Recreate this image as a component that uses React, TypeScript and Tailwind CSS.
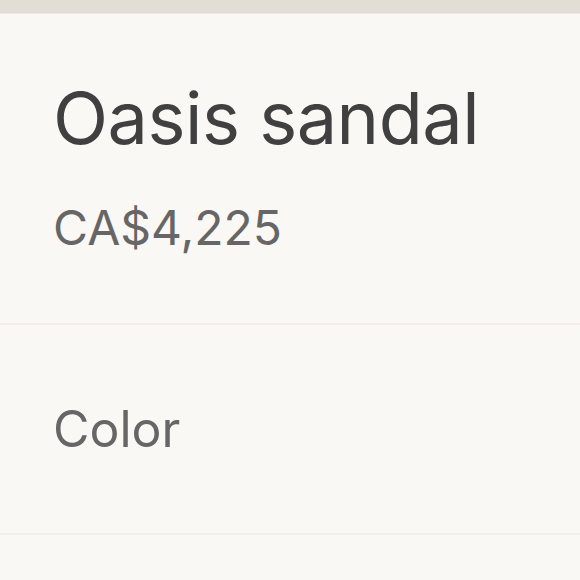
export default function App() {
  return (
    <div className="w-[580px] h-[580px] overflow-hidden bg-[#faf8f4]" style={{ fontFamily: 'Inter, "Noto Sans", sans-serif' }}>
      <div className="h-[14px] bg-[#e2ded6] border-b border-[#ece7df]" />
      <div className="px-[53px] pt-[68px] h-[311px] border-b-2 border-[#f3eeea]">
        <h1 className="text-[72px] leading-[72px] text-[#404040] tracking-[-0.5px]">Oasis sandal</h1>
        <p className="mt-[50px] text-[48px] leading-[48px] text-[#666666]">CA$4,225</p>
      </div>
      <div className="px-[53px] h-[210px] flex items-center border-b-2 border-[#f3eeea]">
        <span className="text-[50px] leading-[50px] text-[#666666]">Color</span>
      </div>
    </div>
  );
}
